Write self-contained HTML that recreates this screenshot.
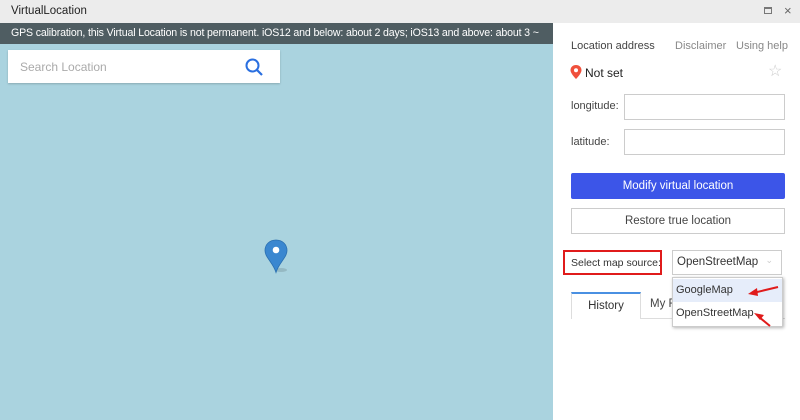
<!DOCTYPE html>
<html><head><meta charset="utf-8"><style>
*{margin:0;padding:0;box-sizing:border-box}
body{width:800px;height:420px;overflow:hidden;font-family:"Liberation Sans",sans-serif;background:#fff;position:relative}
.a{position:absolute;white-space:nowrap}
</style></head><body>
<div class="a" style="left:0;top:0;width:800px;height:23px;background:#ececec"></div>
<div class="a" style="left:11px;top:5px;font-size:11.5px;color:#222">VirtualLocation</div>
<div class="a" style="left:764px;top:7px;width:8px;height:7px;border:1px solid #777;border-top-width:2px"></div>
<div class="a" style="left:784px;top:3px;font-size:13px;color:#666">×</div>
<div class="a" style="left:0;top:23px;width:553px;height:397px;background:#aad3df"></div>
<div class="a" style="left:0;top:23px;width:553px;height:21px;background:#4f5d62;overflow:hidden"></div>
<div class="a" style="left:11px;top:27px;font-size:10.6px;color:#fff;letter-spacing:-0.15px;width:535px;overflow:hidden">GPS calibration, this Virtual Location is not permanent. iOS12 and below: about 2 days; iOS13 and above: about 3 ~</div>
<div class="a" style="left:8px;top:50px;width:272px;height:33px;background:#fff;box-shadow:0 1px 2px rgba(0,0,0,.2)"></div>
<div class="a" style="left:20px;top:60px;font-size:12px;color:#aaa">Search Location</div>
<svg class="a" style="left:244px;top:57px" width="20" height="20" viewBox="0 0 20 20"><circle cx="8.5" cy="8.5" r="6" fill="none" stroke="#2a6fe0" stroke-width="2"/><path d="M13 13l5 5" stroke="#2a6fe0" stroke-width="2.2"/></svg>
<svg class="a" style="left:264px;top:239px" width="28" height="36" viewBox="0 0 28 36"><ellipse cx="17" cy="31" rx="6" ry="2" fill="rgba(0,0,0,.12)"/><path d="M12 1C5.5 1 1 5.5 1 11.5c0 7 8 12 11 22 3-10 11-15 11-22C23 5.5 18.5 1 12 1z" fill="#3a87d0" stroke="#2a6fb0" stroke-width=".8"/><circle cx="12" cy="11" r="3.3" fill="#fff"/></svg>
<div class="a" style="left:571px;top:40px;font-size:11px;color:#444">Location address</div>
<div class="a" style="left:675px;top:40px;font-size:11px;color:#888">Disclaimer</div>
<div class="a" style="left:736px;top:40px;font-size:11px;color:#888">Using help</div>
<svg class="a" style="left:570px;top:65px" width="12" height="14" viewBox="0 0 12 14"><path d="M6 0C2.7 0 .5 2.3.5 5.2 .5 8.5 6 14 6 14s5.5-5.5 5.5-8.8C11.5 2.3 9.3 0 6 0z" fill="#f0503c"/><circle cx="6" cy="5.2" r="2" fill="#fff"/></svg>
<div class="a" style="left:585px;top:66px;font-size:12px;color:#222">Not set</div>
<div class="a" style="left:768px;top:61px;font-size:16px;color:#ccc">☆</div>
<div class="a" style="left:571px;top:100px;font-size:11px;color:#444">longitude:</div>
<div class="a" style="left:624px;top:94px;width:161px;height:26px;border:1px solid #ccc"></div>
<div class="a" style="left:571px;top:136px;font-size:11px;color:#444">latitude:</div>
<div class="a" style="left:624px;top:129px;width:161px;height:26px;border:1px solid #ccc"></div>
<div class="a" style="left:571px;top:173px;width:214px;height:26px;background:#3c55e8;border-radius:2px;color:#fff;font-size:11.5px;text-align:center;line-height:26px">Modify virtual location</div>
<div class="a" style="left:571px;top:208px;width:214px;height:26px;border:1px solid #ccc;color:#444;font-size:11.5px;text-align:center;line-height:24px">Restore true location</div>
<div class="a" style="left:563px;top:250px;width:99px;height:25px;border:2px solid #e01b1b;font-size:10.5px;color:#333;padding:5px 0 0 6px">Select map source:</div>
<div class="a" style="left:672px;top:250px;width:110px;height:25px;border:1px solid #ccc;font-size:11.5px;color:#333;padding:5px 0 0 4px">OpenStreetMap<span style="position:absolute;right:8px;top:4px;color:#ccc;font-size:9px">⌄</span></div>
<div class="a" style="left:571px;top:292px;width:70px;height:27px;border-top:2px solid #4a90e2;border-left:1px solid #ddd;border-right:1px solid #ddd;font-size:11.5px;color:#333;text-align:center;line-height:25px">History</div>
<div class="a" style="left:641px;top:318px;width:144px;height:1px;background:#ddd"></div>
<div class="a" style="left:650px;top:298px;font-size:11.5px;color:#444">My F</div>
<div class="a" style="left:672px;top:277px;width:111px;height:50px;background:#fff;border:1px solid #ccc;box-shadow:1px 1px 3px rgba(0,0,0,.3)"></div>
<div class="a" style="left:673px;top:279px;width:109px;height:23px;background:#e6edfa"></div>
<div class="a" style="left:676px;top:284px;font-size:11px;color:#333">GoogleMap</div>
<div class="a" style="left:676px;top:307px;font-size:11px;color:#333">OpenStreetMap</div>
<svg class="a" style="left:745px;top:280px" width="40" height="50" viewBox="0 0 40 50"><path d="M33 7L8 13" stroke="#e01b1b" stroke-width="2"/><path d="M3 14l9-6 1 8z" fill="#e01b1b"/><path d="M25 46L14 37" stroke="#e01b1b" stroke-width="2"/><path d="M9 33l10 2-4 5z" fill="#e01b1b"/></svg>
</body></html>
